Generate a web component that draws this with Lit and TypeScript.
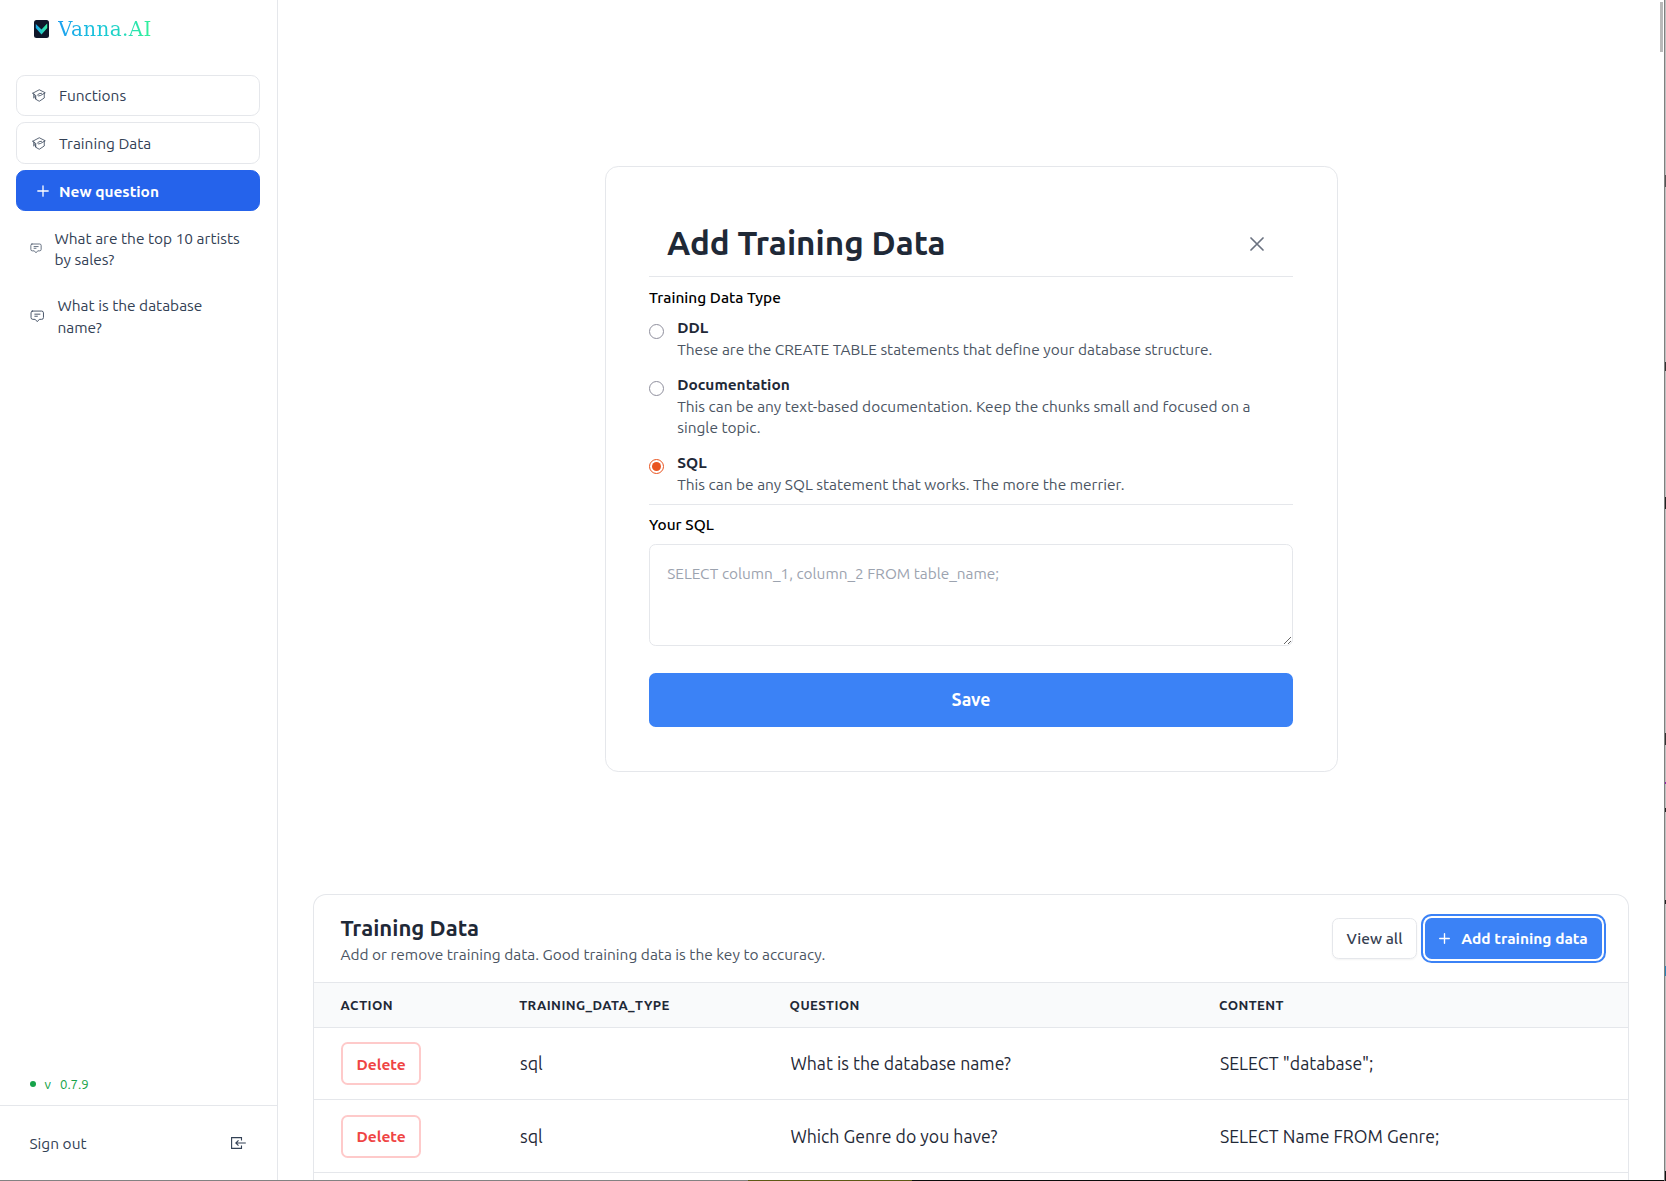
import { LitElement, html, css, svg } from 'lit';
import { customElement } from 'lit/decorators.js';

const capIcon = html`<svg class="cap" viewBox="0 0 28 26" fill="none" stroke="#334155" stroke-width="1.6" stroke-linejoin="round" stroke-linecap="round">
  <path d="M1.500 8.500 14.500 1.500 26.500 7.500 17 13Q12 15 11 12 13 8.500 19 8.500"/>
  <path d="M1.500 8.500 6 11.500V16M3.500 10.500V18M6 16 7.500 20M24.500 9V18L14.500 24.500 7.500 20.500V13"/>
</svg>`;

const plusIcon = (width: number) => html`<svg class="plus" viewBox="0 0 12 12" fill="none" stroke="#fff" stroke-linecap="round" stroke-width=${width}>
  <path d="M6 .8V11.200M.8 6H11.200"/>
</svg>`;

const chatShape = svg`<path d="M3.500 1.500H22.500Q26 1.500 26 5V14Q26 17.500 22.500 17.500H18L14 22 10 17.500H5.500Q2 17.500 2 14V5Q2 1.500 5.500 1.500Z"/><path d="M8.500 7.500H20M8.500 11.500H15"/>`;

interface Option {
  title: string;
  text: string;
  checked: boolean;
}

const options: Option[] = [
  { title: 'DDL', text: 'These are the CREATE TABLE statements that define your database structure.', checked: false },
  { title: 'Documentation', text: 'This can be any text-based documentation. Keep the chunks small and focused on a single topic.', checked: false },
  { title: 'SQL', text: 'This can be any SQL statement that works. The more the merrier.', checked: true },
];

const rows = [
  { type: 'sql', question: 'What is the database name?', content: 'SELECT "database";' },
  { type: 'sql', question: 'Which Genre do you have?', content: 'SELECT Name FROM Genre;' },
];

@customElement('side-bar')
class SideBar extends LitElement {
  static styles = css`
    :host { display: flex; flex-direction: column; width: 277px; flex: none; border-right: 1px solid #e5e7eb; color: #334155; font-size: 15.46px; line-height: 22px; }
    svg { display: block; flex: none; }
    .brand { display: flex; align-items: center; gap: 9px; height: 57px; padding-left: 34px; }
    .logo { width: 15px; height: 18px; }
    .name { font-family: "Roboto Slab", "DejaVu Serif", serif; font-size: 20px; letter-spacing: 0.35px; background: linear-gradient(90deg, #1c9ff0, #17c6d8 45%, #35f29a); -webkit-background-clip: text; background-clip: text; color: transparent; }
    .menu { display: flex; flex-direction: column; gap: 6px; padding: 18px 17px 0 16px; }
    .link { display: flex; align-items: center; box-sizing: border-box; height: 41.300px; padding-left: 15px; border: 1px solid #e5e7eb; border-radius: 8.800px; gap: 13px; }
    .lower { padding-top: 1.600px; }
    .cap { width: 14px; height: 13px; }
    .lower .cap { margin-top: -1px; }
    .new { background: #2563eb; border-color: #2563eb; color: #fff; font-weight: 700; padding: 3px 0 0 20px; gap: 10px; }
    .plus { width: 12px; height: 12px; margin-top: -2px; }
    .history { display: flex; flex-direction: column; padding: 17.300px 17px 0 30px; }
    .item { display: flex; align-items: center; }
    .first { gap: 12.500px; line-height: 21px; }
    .second { gap: 13px; margin-top: 24.500px; }
    .small { width: 12px; height: 11px; margin-top: -2px; }
    .big { width: 14.500px; height: 13px; margin-top: -1px; }
    .version { display: flex; align-items: center; margin-top: auto; padding: 0 0 10px 30px; color: #16a34a; font-size: 13.200px; line-height: 22px; }
    .dot { width: 6px; height: 6px; border-radius: 50%; background: #16a34a; margin-right: 8.500px; }
    .gap { margin-right: 9px; }
    .signout { display: flex; align-items: center; justify-content: space-between; box-sizing: border-box; height: 75px; padding: 1px 31px 0 29.500px; border-top: 1px solid #e5e7eb; }
    .exit { width: 15px; height: 12px; margin-top: -2px; }
  `;

  render() {
    return html`
      <div class="brand">
        <svg class="logo" viewBox="0 0 15 18">
          <defs><linearGradient id="g" x1="0" x2="1"><stop offset="0" stop-color="#18a5ee" /><stop offset="1" stop-color="#35f0a0" /></linearGradient></defs>
          <rect width="15" height="18" rx="2.500" fill="#0f172a" />
          <path d="M1.800 4 7.500 9.500 13.200 3.500V8L7.500 14.500 1.800 8Z" fill="url(#g)" />
        </svg>
        <span class="name">Vanna.AI</span>
      </div>
      <nav class="menu">
        <a class="link">${capIcon}<span>Functions</span></a>
        <a class="link lower">${capIcon}<span>Training Data</span></a>
        <a class="link new">${plusIcon(1.3)}<span>New question</span></a>
      </nav>
      <div class="history">
        <div class="item first">
          <svg class="small" viewBox="0 0 28 24" fill="none" stroke="#475569" stroke-width="1.900">${chatShape}</svg>
          <span>What are the top 10 artists<br />by sales?</span>
        </div>
        <div class="item second">
          <svg class="big" viewBox="0 0 28 24" fill="none" stroke="#475569" stroke-width="1.900">${chatShape}</svg>
          <span>What is the database<br />name?</span>
        </div>
      </div>
      <div class="version"><span class="dot"></span><span class="gap">v</span><span>0.7.9</span></div>
      <div class="signout">
        <span>Sign out</span>
        <svg class="exit" viewBox="0 0 15 12" fill="none" stroke="#334155" stroke-width="1.100">
          <path d="M10.500 3.500V.6H.6V11.400H10.500V8.500M14.800 6H4.800M7.500 3.300 4.800 6 7.500 8.700" />
        </svg>
      </div>
    `;
  }
}

@customElement('training-form')
class TrainingForm extends LitElement {
  static styles = css`
    :host { display: block; flex: none; box-sizing: border-box; width: 733px; height: 606px; padding: 0 44px 0 43px; border: 1px solid #e5e7eb; border-radius: 13.200px; font-size: 15.460px; line-height: 22px; }
    .head { display: flex; justify-content: space-between; align-items: center; height: 40px; padding: 56px 29px 13px 18.400px; border-bottom: 1px solid #e5e7eb; }
    h2 { margin: 0; font-size: 33.200px; line-height: 40px; font-weight: 700; color: #1f2937; }
    .close { display: block; width: 14px; height: 14px; margin-top: 2.600px; }
    .label { padding: 9.700px 0 0 0.600px; font-weight: 500; color: #000; }
    .options { display: flex; flex-direction: column; gap: 12.800px; padding: 7.300px 0 8.800px; border-bottom: 1px solid #e5e7eb; }
    .option { display: flex; gap: 13.700px; }
    .radio { box-sizing: border-box; flex: none; width: 15px; height: 15px; margin-top: 8px; border: 1px solid #8f8f9d; border-radius: 50%; background: #fff; }
    .checked { display: grid; place-items: center; border-color: #e95420; }
    .checked::after { content: ""; width: 9px; height: 9px; border-radius: 50%; background: #e95420; }
    .body { padding-top: 0.800px; max-width: 596px; }
    .title { margin-bottom: 0.400px; font-weight: 700; color: #1f2937; }
    .text { color: #4b5563; line-height: 21px; }
    .sql { padding-top: 8.700px; }
    textarea { display: block; box-sizing: border-box; width: 644px; height: 102px; margin: 8.300px 0 27px; padding: 17.700px; border: 1px solid #e5e7eb; border-radius: 6.600px; outline: none; background: #fff; font: inherit; font-size: 15.400px; resize: both; }
    textarea::placeholder { color: #9ca3af; opacity: 1; }
    button { display: block; width: 644px; height: 54px; padding: 0 0 0 1px; border: 0; border-radius: 6.600px; background: #3b82f6; color: #fff; font: 700 17.700px/26px Ubuntu, "Noto Sans", sans-serif; }
  `;

  render() {
    return html`
      <div class="head">
        <h2>Add Training Data</h2>
        <svg class="close" viewBox="0 0 14 14" fill="none" stroke="#6b7280" stroke-width="1.700" stroke-linecap="round">
          <path d="M1 1 13 13M13 1 1 13" />
        </svg>
      </div>
      <div class="label">Training Data Type</div>
      <div class="options">
        ${options.map(
          (o) => html`<div class="option">
            <span class=${o.checked ? 'radio checked' : 'radio'}></span>
            <div class="body">
              <div class="title">${o.title}</div>
              <div class="text">${o.text}</div>
            </div>
          </div>`,
        )}
      </div>
      <div class="label sql">Your SQL</div>
      <textarea placeholder="SELECT column_1, column_2 FROM table_name;"></textarea>
      <button>Save</button>
    `;
  }
}

@customElement('training-table')
class TrainingTable extends LitElement {
  static styles = css`
    :host { display: block; flex: none; border: 1px solid #e5e7eb; border-radius: 13.200px 13.200px 0 0; border-bottom: 0; color: #1f2937; }
    .bar { display: flex; align-items: center; box-sizing: border-box; height: 87px; padding: 0 26px 0 26.400px; gap: 8px; }
    .heading { flex: 1; padding-top: 1.600px; }
    h3 { margin: 0 0 0.700px; font-size: 22.100px; line-height: 30px; font-weight: 700; }
    .sub { font-size: 15.460px; line-height: 22px; color: #4b5563; }
    .btn { display: flex; align-items: center; justify-content: center; box-sizing: border-box; height: 41px; border-radius: 6.600px; font-size: 15.500px; line-height: 22px; }
    .view { width: 85px; border: 1px solid #e5e7eb; color: #374151; font-weight: 500; box-shadow: 0 1px 2px rgba(0, 0, 0, 0.05); }
    .add { width: 177px; gap: 11px; background: #3b82f6; color: #fff; font-weight: 700; box-shadow: 0 0 0 2px #fff, 0 0 0 4px #3b82f6; }
    .plus { display: block; width: 11px; height: 11px; margin-top: -1px; }
    .row { display: grid; grid-template-columns: 178.600px 270.400px 429.500px 1fr; align-items: center; height: 72px; border-top: 1px solid #e5e7eb; font-size: 17.700px; line-height: 26px; }
    .row > * { padding-left: 26.600px; }
    .row > .cell { padding: 1.200px 0 0 27.400px; }
    .row.titles { height: 44px; background: #f9fafb; font-size: 13.200px; font-weight: 700; letter-spacing: 0.430px; }
    .row.first { height: 71px; }
    .delete { width: 80px; height: 43px; padding: 2px 0 0 1px; border: 2px solid #fecaca; color: #ef4444; font-weight: 700; background: #fff; }
    .end { height: 8px; border-top: 1px solid #e5e7eb; }
  `;

  render() {
    return html`
      <div class="bar">
        <div class="heading">
          <h3>Training Data</h3>
          <div class="sub">Add or remove training data. Good training data is the key to accuracy.</div>
        </div>
        <div class="btn view">View all</div>
        <div class="btn add">${plusIcon(1.5)}<span>Add training data</span></div>
      </div>
      <div class="row titles"><span>ACTION</span><span>TRAINING_DATA_TYPE</span><span>QUESTION</span><span>CONTENT</span></div>
      ${rows.map(
        (r, i) => html`<div class=${i === 0 ? 'row first' : 'row'}>
          <div><div class="btn delete">Delete</div></div>
          <span class="cell">${r.type}</span><span class="cell">${r.question}</span><span class="cell">${r.content}</span>
        </div>`,
      )}
      <div class="end"></div>
    `;
  }
}

@customElement('app-root')
class AppRoot extends LitElement {
  static styles = css`
    :host { display: grid; grid-template-columns: 1fr 2px; grid-template-rows: 1180px 1px; width: 1666px; height: 1181px; overflow: hidden; background: #fff; font-family: Ubuntu, "Noto Sans", sans-serif; }
    .page { display: flex; overflow: hidden; }
    main { position: relative; flex: 1; display: flex; flex-direction: column; align-items: center; padding-top: 166px; }
    training-table { align-self: stretch; margin: 122px 35px 0; }
    .thumb { position: absolute; top: 2px; right: 1px; width: 3px; height: 50px; background: #b9b9b9; }
    .edge { grid-row: 1 / 3; grid-column: 2; border-left: 1px solid #808080; background: linear-gradient(#c0c0c0 0 175px, #555 175px 187px, #c0c0c0 187px 362px, #333 362px 371px, #c0c0c0 371px 497px, #222 497px 509px, #c0c0c0 509px 733px, #333 733px 745px, #c0c0c0 745px 782px, #8e24aa 782px 784px, #c0c0c0 784px 808px, #222 808px 812px, #c0c0c0 812px 900px, #222 900px 904px, #c0c0c0 904px 966px, #2b86b8 966px 976px, #c0c0c0 976px 1171px, #111 1171px); }
    .base { background: linear-gradient(90deg, #828282 0 748px, #5e5a14 748px 912px, #0c0c0c 912px); }
  `;

  render() {
    return html`
      <div class="page">
        <side-bar></side-bar>
        <main>
          <training-form></training-form>
          <training-table></training-table>
          <div class="thumb"></div>
        </main>
      </div>
      <div class="edge"></div>
      <div class="base"></div>
    `;
  }
}
